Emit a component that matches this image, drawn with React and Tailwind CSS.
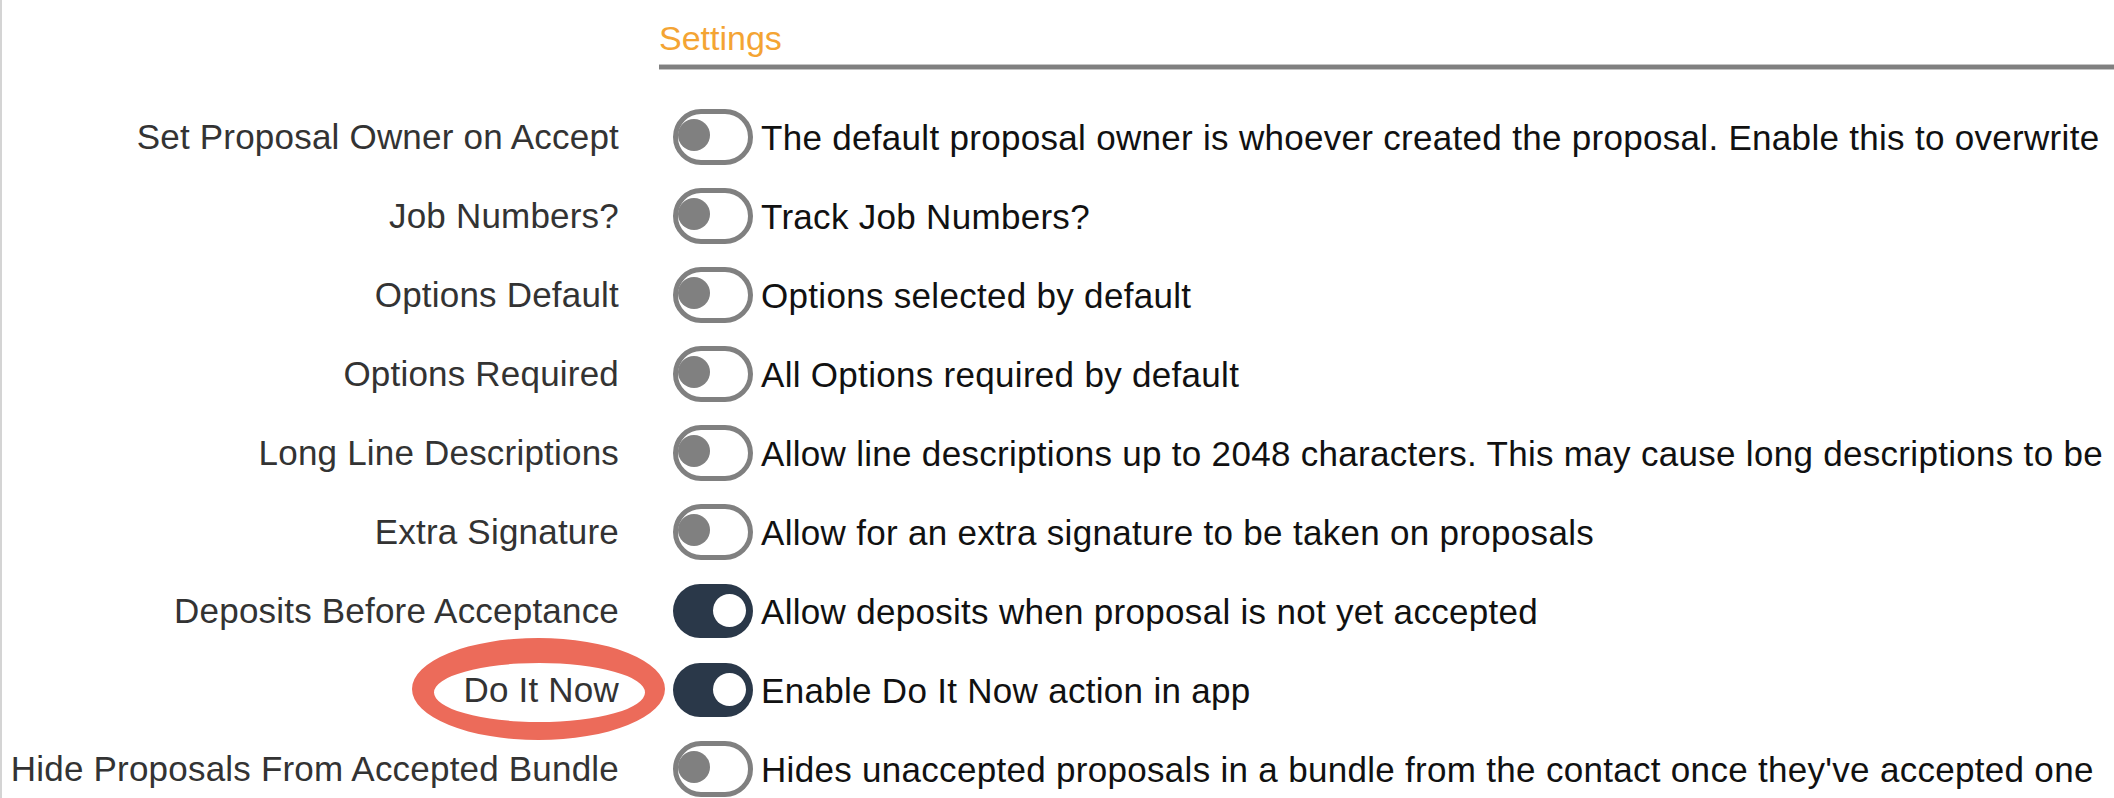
import React from "react";

const settings = [
  {
    label: "Set Proposal Owner on Accept",
    text: "The default proposal owner is whoever created the proposal. Enable this to overwrite",
    on: false,
  },
  { label: "Job Numbers?", text: "Track Job Numbers?", on: false },
  { label: "Options Default", text: "Options selected by default", on: false },
  { label: "Options Required", text: "All Options required by default", on: false },
  {
    label: "Long Line Descriptions",
    text: "Allow line descriptions up to 2048 characters. This may cause long descriptions to be",
    on: false,
  },
  { label: "Extra Signature", text: "Allow for an extra signature to be taken on proposals", on: false },
  { label: "Deposits Before Acceptance", text: "Allow deposits when proposal is not yet accepted", on: true },
  { label: "Do It Now", text: "Enable Do It Now action in app", on: true },
  {
    label: "Hide Proposals From Accepted Bundle",
    text: "Hides unaccepted proposals in a bundle from the contact once they've accepted one",
    on: false,
  },
];

const Toggle = ({ on }) => {
  if (on) {
    return (
      <div className="w-[80px] h-[54px] shrink-0 rounded-full bg-[#2a3849] flex items-center justify-end pr-[7px]">
        <div className="w-[33px] h-[33px] rounded-full bg-white" />
      </div>
    );
  }
  return (
    <div className="w-[80px] h-[56px] shrink-0 rounded-full border-[5px] border-[#808080] bg-white flex items-center">
      <div className="w-[32px] h-[32px] rounded-full bg-[#808080] -mt-[3px]" />
    </div>
  );
};

const App = () => {
  return (
    <div
      className="relative w-full h-[798px] overflow-hidden bg-white border-l-2 border-[#d4d4d4]"
      style={{ fontFamily: '"Liberation Sans", Arial, sans-serif' }}
    >
      <div className="pl-[657px] pt-[21px]">
        <h2 className="text-[34px] leading-none text-[#f4a433] font-normal">Settings</h2>
        <div className="mt-[9px] h-[6px] bg-[#808080] border-y border-[#c4c4c4]" />
      </div>

      <div className="mt-[27px]">
        {settings.map((s) => (
          <div key={s.label} className="flex items-center h-[79px]">
            <div className="w-[657px] shrink-0 pr-[40px] text-right whitespace-nowrap">
              <span className="inline-block pt-[1px] text-[35px] leading-none tracking-[0.2px] text-[#333333]">
                {s.label}
              </span>
            </div>
            <div className="flex items-center pl-[14px] gap-[8px]">
              <Toggle on={s.on} />
              <span className="pt-[1px] text-[35px] leading-none tracking-[0.3px] text-[#111111] whitespace-nowrap">
                {s.text}
              </span>
            </div>
          </div>
        ))}
      </div>

      <svg
        className="absolute left-[410px] top-[638px] pointer-events-none"
        width="254"
        height="103"
        viewBox="0 0 254 103"
      >
        <path
          fillRule="evenodd"
          fill="#ec6b5a"
          d="M0 51a126.5 51 0 1 0 253 0a126.5 51 0 1 0 -253 0Z M22 54.5a105.5 29.5 0 1 0 211 0a105.5 29.5 0 1 0 -211 0Z"
        />
      </svg>
    </div>
  );
};

export default App;
